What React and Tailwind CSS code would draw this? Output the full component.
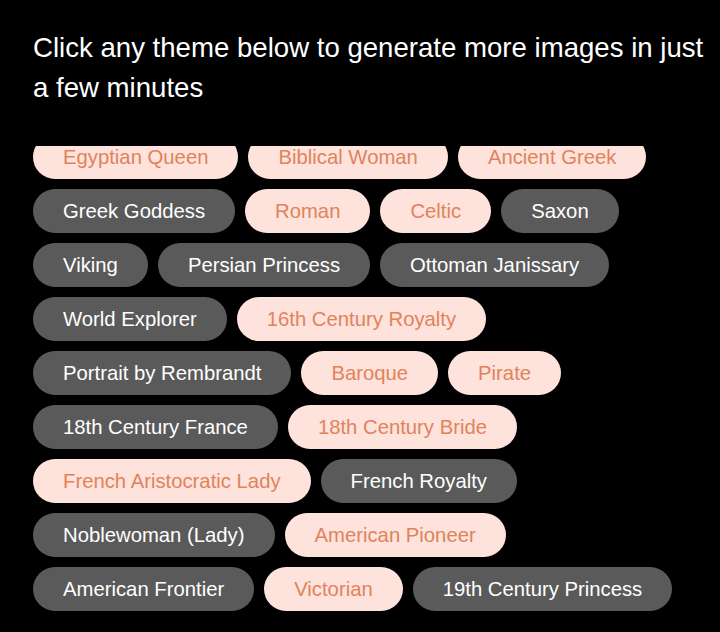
import React from "react";

const rows = [
  [
    ["Egyptian Queen", true],
    ["Biblical Woman", true],
    ["Ancient Greek", true],
  ],
  [
    ["Greek Goddess", false],
    ["Roman", true],
    ["Celtic", true],
    ["Saxon", false],
  ],
  [
    ["Viking", false],
    ["Persian Princess", false],
    ["Ottoman Janissary", false],
  ],
  [
    ["World Explorer", false],
    ["16th Century Royalty", true],
  ],
  [
    ["Portrait by Rembrandt", false],
    ["Baroque", true],
    ["Pirate", true],
  ],
  [
    ["18th Century France", false],
    ["18th Century Bride", true],
  ],
  [
    ["French Aristocratic Lady", true],
    ["French Royalty", false],
  ],
  [
    ["Noblewoman (Lady)", false],
    ["American Pioneer", true],
  ],
  [
    ["American Frontier", false],
    ["Victorian", true],
    ["19th Century Princess", false],
  ],
];

const ThemePill = ({ label, selected }) => (
  <button
    type="button"
    className={
      selected
        ? "h-[44px] px-[30px] rounded-full bg-[#fde3dc] text-[#e2825a] text-[20.3px] whitespace-nowrap"
        : "h-[44px] px-[30px] rounded-full bg-[#5a5a5a] text-white text-[20.3px] whitespace-nowrap"
    }
  >
    {label}
  </button>
);

const App = () => {
  return (
    <div
      className="w-[720px] h-[632px] bg-black overflow-hidden pl-[33px] pt-[28px]"
      style={{ fontFamily: '"Liberation Sans", Arial, sans-serif' }}
    >
      {/* Heading */}
      <h1 className="text-white text-[27.6px] leading-[40px] pr-2">
        Click any theme below to generate more images in just a few minutes
      </h1>

      {/* Theme list (scrolled) */}
      <div className="mt-[38px] h-[500px] overflow-hidden">
        <div className="-mt-[11px] flex flex-col gap-[10px]">
          {rows.map((row, i) => (
            <div key={i} className="flex gap-[10px]">
              {row.map(([label, selected]) => (
                <ThemePill key={label} label={label} selected={selected} />
              ))}
            </div>
          ))}
        </div>
      </div>
    </div>
  );
};

export default App;
